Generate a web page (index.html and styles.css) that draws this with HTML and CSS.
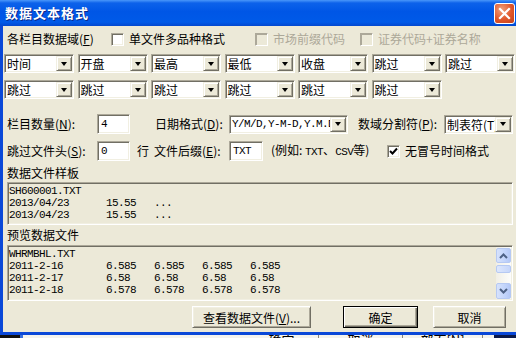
FILE: index.html
```html
<!DOCTYPE html>
<html lang="zh-CN">
<head>
    <meta charset="UTF-8">
    <title>数据文本格式</title>
    <link rel="stylesheet" href="styles.css">
</head>
<body>
    <div class="dialog">
        <div class="titlebar">
            <span class="title">数据文本格式</span>
            <span class="close-btn">
                <svg width="13" height="13" viewBox="0 0 13 13"><path d="M2 2 L11 11 M11 2 L2 11" stroke="#fff" stroke-width="2.2" stroke-linecap="square"/></svg>
            </span>
        </div>

        <div class="client">
            <div class="fields-row">
                <span class="fields-label">各栏目数据域(<u>F</u>)</span>
                <label class="check check-multi"><span class="box"></span>单文件多品种格式</label>
                <label class="check check-market disabled"><span class="box"></span>市场前缀代码</label>
                <label class="check disabled"><span class="box"></span>证券代码+证券名称</label>
            </div>

            <!-- column mapping -->
            <div class="field-grid">
                <div class="combo"><span class="combo-text">时间</span><span class="combo-btn"></span></div>
                <div class="combo"><span class="combo-text">开盘</span><span class="combo-btn"></span></div>
                <div class="combo"><span class="combo-text">最高</span><span class="combo-btn"></span></div>
                <div class="combo"><span class="combo-text">最低</span><span class="combo-btn"></span></div>
                <div class="combo"><span class="combo-text">收盘</span><span class="combo-btn"></span></div>
                <div class="combo"><span class="combo-text">跳过</span><span class="combo-btn"></span></div>
                <div class="combo"><span class="combo-text">跳过</span><span class="combo-btn"></span></div>
                <div class="combo"><span class="combo-text">跳过</span><span class="combo-btn"></span></div>
                <div class="combo"><span class="combo-text">跳过</span><span class="combo-btn"></span></div>
                <div class="combo"><span class="combo-text">跳过</span><span class="combo-btn"></span></div>
                <div class="combo"><span class="combo-text">跳过</span><span class="combo-btn"></span></div>
                <div class="combo"><span class="combo-text">跳过</span><span class="combo-btn"></span></div>
                <div class="combo"><span class="combo-text">跳过</span><span class="combo-btn"></span></div>
            </div>

            <div class="param-row first">
                <span class="param-label">栏目数量(<u>N</u>):</span>
                <span class="edit edit-num mono">4</span>
                <span class="param-label date-label">日期格式(<u>D</u>):</span>
                <div class="combo combo-date"><span class="combo-text mono">Y/M/D,Y-M-D,Y.M.D</span><span class="combo-btn"></span></div>
                <span class="param-label sep-label">数域分割符(<u>P</u>):</span>
                <div class="combo combo-sep"><span class="combo-text">制表符(T)</span><span class="combo-btn"></span></div>
            </div>

            <div class="param-row">
                <span class="param-label">跳过文件头(<u>S</u>):</span>
                <span class="edit edit-num mono">0</span>
                <span class="unit">行</span>
                <span class="param-label ext-label">文件后缀(<u>E</u>):</span>
                <span class="edit edit-ext mono">TXT</span>
                <span class="hint">(例如: <span class="mono">TXT</span>、<span class="mono">CSV</span>等)</span>
                <label class="check"><span class="box checked"><svg width="9" height="9" viewBox="0 0 9 9"><path d="M1 4 L3.5 6.5 L8 1.5" fill="none" stroke="#000" stroke-width="2"/></svg></span>无冒号时间格式</label>
            </div>

            <div class="section-label">数据文件样板</div>
            <div class="sample-box mono">
                <div class="line">SH600001.TXT</div>
                <div class="line"><span class="col-date">2013/04/23</span><span class="col">15.55</span><span class="col">...</span></div>
                <div class="line"><span class="col-date">2013/04/23</span><span class="col">15.55</span><span class="col">...</span></div>
            </div>

            <div class="section-label second">预览数据文件</div>
            <div class="preview-box">
                <div class="preview-text mono">
                    <div class="line">WHRMBHL.TXT</div>
                    <div class="line"><span class="col-date">2011-2-16</span><span class="col">6.585</span><span class="col">6.585</span><span class="col">6.585</span><span class="col">6.585</span></div>
                    <div class="line"><span class="col-date">2011-2-17</span><span class="col">6.58</span><span class="col">6.58</span><span class="col">6.58</span><span class="col">6.58</span></div>
                    <div class="line"><span class="col-date">2011-2-18</span><span class="col">6.578</span><span class="col">6.578</span><span class="col">6.578</span><span class="col">6.578</span></div>
                </div>
                <div class="scrollbar">
                    <span class="sb-btn"><svg width="9" height="6" viewBox="0 0 9 6"><path d="M1 5 L4.5 1.5 L8 5" fill="none" stroke="#4d6185" stroke-width="2"/></svg></span>
                    <span class="sb-thumb"></span>
                    <span class="sb-track"></span>
                    <span class="sb-btn down"><svg width="9" height="6" viewBox="0 0 9 6"><path d="M1 1 L4.5 4.5 L8 1" fill="none" stroke="#4d6185" stroke-width="2"/></svg></span>
                </div>
            </div>

            <div class="button-row">
                <button class="push view-btn">查看数据文件(<u>V</u>)...</button>
                <button class="push default ok-btn">确定</button>
                <button class="push cancel-btn">取消</button>
            </div>
        </div>
    </div>

    <!-- window behind the dialog -->
    <div class="taskstrip">
        <span class="strip-dark"></span>
        <span class="strip-edge"></span>
        <span class="strip-cell strip-wide"></span>
        <span class="strip-cell strip-ok">确定</span>
        <span class="strip-cell strip-cancel">取消</span>
        <span class="strip-cell strip-all">部面[N]</span>
        <span class="strip-gap"></span>
        <span class="strip-dark strip-right"></span>
    </div>
</body>
</html>
```

FILE: styles.css
```css
* {
    box-sizing: border-box;
}

body {
    margin: 0;
    width: 516px;
    height: 338px;
    overflow: hidden;
    font-family: "Noto Sans CJK SC", "Liberation Sans", sans-serif;
    font-size: 12px;
    line-height: 16px;
    color: #000;
    background-color: #f4f3ee;
}

u {
    text-decoration: underline;
}

.mono {
    font-family: "Liberation Mono", "Noto Sans CJK SC", monospace;
    font-size: 11px;
    letter-spacing: -0.6px;
}

.dialog {
    height: 335px;
    display: flex;
    flex-direction: column;
    background-color: #0a48d8;
}

.titlebar {
    height: 26px;
    display: flex;
    align-items: center;
    justify-content: space-between;
    padding: 0 1px 0 5px;
    background: linear-gradient(#4a97fa 0, #0d62ea 3px, #0056e6 45%, #005ae8 85%, #0348cf 100%);
}

.title {
    color: #fff;
    font-weight: bold;
    font-size: 13px;
    letter-spacing: 1px;
    text-shadow: 1px 1px #0b2a8c;
}

.close-btn {
    width: 21px;
    height: 21px;
    display: flex;
    align-items: center;
    justify-content: center;
    border: 1px solid #fff;
    border-radius: 3px;
    background: radial-gradient(circle at 35% 30%, #f0a07c, #e0562a 55%, #c1401a);
}

.client {
    flex: 1;
    margin: 0 0 3px 3px;
    background-color: #ece9d8;
}

/* first row: checkboxes */
.fields-row {
    height: 26px;
    display: flex;
    align-items: center;
    padding-left: 4px;
}

.fields-label {
    width: 104px;
}

.check {
    display: flex;
    align-items: center;
    gap: 5px;
}

.check-multi {
    width: 144px;
}

.check-market {
    width: 105px;
}

.box {
    width: 13px;
    height: 13px;
    display: flex;
    align-items: center;
    justify-content: center;
    background-color: #fff;
    border: 1px solid;
    border-color: #aca899 #fff #fff #aca899;
    box-shadow: inset 1px 1px #716f64, inset -1px -1px #f1efe2;
}

.check.disabled {
    color: #aca899;
}

.check.disabled .box {
    background-color: #ece9d8;
    box-shadow: inset 1px 1px #aca899;
}

/* combo boxes */
.field-grid {
    display: grid;
    grid-template-columns: repeat(7, 70px);
    grid-auto-rows: 19px;
    column-gap: 3.5px;
    row-gap: 7px;
    margin-top: 2px;
    padding-left: 1px;
}

.combo {
    height: 19px;
    display: flex;
    padding: 1px;
    background-color: #fff;
    border: 1px solid;
    border-color: #aca899 #fff #fff #aca899;
    box-shadow: inset 1px 1px #716f64, inset -1px -1px #f1efe2;
}

.combo-text {
    flex: 1;
    padding-left: 1px;
    line-height: 15px;
    white-space: nowrap;
    overflow: hidden;
}

.combo-btn {
    width: 16px;
    height: 15px;
    flex: none;
    display: flex;
    align-items: center;
    justify-content: center;
    background-color: #ece9d8;
    border: 1px solid;
    border-color: #f1efe2 #716f64 #716f64 #f1efe2;
    box-shadow: inset 1px 1px #fff, inset -1px -1px #aca899;
}

.combo-btn::after {
    content: "";
    border-top: 4px solid #000;
    border-left: 3.5px solid transparent;
    border-right: 3.5px solid transparent;
}

/* parameter rows */
.param-row {
    height: 20px;
    display: flex;
    align-items: center;
    padding-left: 4px;
    margin-top: 7px;
}

.param-row.first {
    margin-top: 15px;
}

.param-label {
    width: 90px;
    flex: none;
    white-space: nowrap;
}

.date-label {
    width: 74px;
    margin-left: 25px;
}

.sep-label {
    width: 86px;
    margin-left: 10px;
}

.ext-label {
    width: 75px;
    margin-left: 5px;
}

.combo-date {
    width: 119px;
}

.combo-sep {
    width: 69px;
}

.edit {
    height: 20px;
    flex: none;
    padding: 2px 0 0 3px;
    line-height: 14px;
    background-color: #fff;
    border: 1px solid;
    border-color: #aca899 #fff #fff #aca899;
    box-shadow: inset 1px 1px #716f64, inset -1px -1px #f1efe2;
}

.edit-num {
    width: 33px;
}

.edit-ext {
    width: 34px;
}

.unit {
    width: 12px;
    margin-left: 7px;
}

.hint {
    width: 116px;
    margin-left: 8px;
    white-space: nowrap;
}

/* sample and preview boxes */
.section-label {
    height: 20px;
    padding: 4px 0 0 4px;
}

.section-label.second {
    padding-top: 2px;
}

.sample-box,
.preview-box {
    margin: 1px 3px 0 4px;
    background-color: #ece9d8;
    border: 1px solid;
    border-color: #aca899 #fff #fff #aca899;
    box-shadow: inset 1px 1px #716f64, inset -1px -1px #f1efe2;
}

.sample-box {
    height: 43px;
    padding: 2px 1px 0 1px;
}

.preview-box {
    height: 56px;
    margin-top: 0;
    padding: 1px;
    display: flex;
}

.preview-text {
    flex: 1;
    padding-top: 1px;
}

.line {
    height: 12px;
    display: flex;
    line-height: 12px;
    white-space: nowrap;
}

.col-date {
    width: 97px;
}

.col {
    width: 48px;
}

.scrollbar {
    width: 15px;
    display: flex;
    flex-direction: column;
    padding-top: 1px;
    background: linear-gradient(to right, #f1efe6, #fdfdfb);
}

.sb-btn {
    height: 15px;
    display: flex;
    align-items: center;
    justify-content: center;
    border: 1px solid #b6c9f2;
    border-radius: 2px;
    background: linear-gradient(to right, #d6e2fc, #c2d4fb 60%, #b4c8f6);
}

.sb-btn.down {
    height: 16px;
}

.sb-thumb {
    height: 8px;
    margin-top: 2px;
    border: 1px solid #b6c9f2;
    border-radius: 2px;
    background: linear-gradient(to right, #dde7fd, #c6d6fa);
}

.sb-track {
    flex: 1;
}

/* buttons */
.button-row {
    height: 22px;
    margin-top: 5px;
    display: flex;
    justify-content: flex-end;
    padding-right: 10px;
}

.push {
    height: 22px;
    padding: 0;
    font-family: "Noto Sans CJK SC", sans-serif;
    font-size: 12px;
    color: #000;
    background-color: #ece9d8;
    border: 1px solid;
    border-color: #fff #716f64 #716f64 #fff;
    box-shadow: inset 1px 1px #f1efe2, inset -1px -1px #aca899;
}

.push.default {
    border-color: #000;
    box-shadow: inset 1px 1px #fff, inset -1px -1px #716f64, inset -2px -2px #aca899;
}

.view-btn {
    width: 119px;
    margin-right: 32px;
}

.ok-btn {
    width: 75px;
    margin-right: 15px;
}

.cancel-btn {
    width: 73px;
}

/* strip of the window behind */
.taskstrip {
    height: 3px;
    display: flex;
    align-items: flex-start;
    overflow: hidden;
    background-color: #f4f3ee;
}

.strip-dark {
    width: 20px;
    height: 3px;
    background-color: #111;
}

.strip-right {
    width: 22px;
    background-color: #0c1a4a;
}

.strip-edge {
    width: 3px;
    height: 3px;
    background-color: #3a6fdc;
}

.strip-cell {
    height: 14px;
    margin-top: -2px;
    border-right: 1px solid #8a877a;
    text-align: center;
    font-size: 13px;
    line-height: 14px;
}

.strip-wide {
    width: 222px;
    border-right: 0;
}

.strip-ok {
    width: 74px;
}

.strip-cancel {
    width: 84px;
}

.strip-all {
    width: 80px;
}

.strip-gap {
    width: 11px;
}
```
